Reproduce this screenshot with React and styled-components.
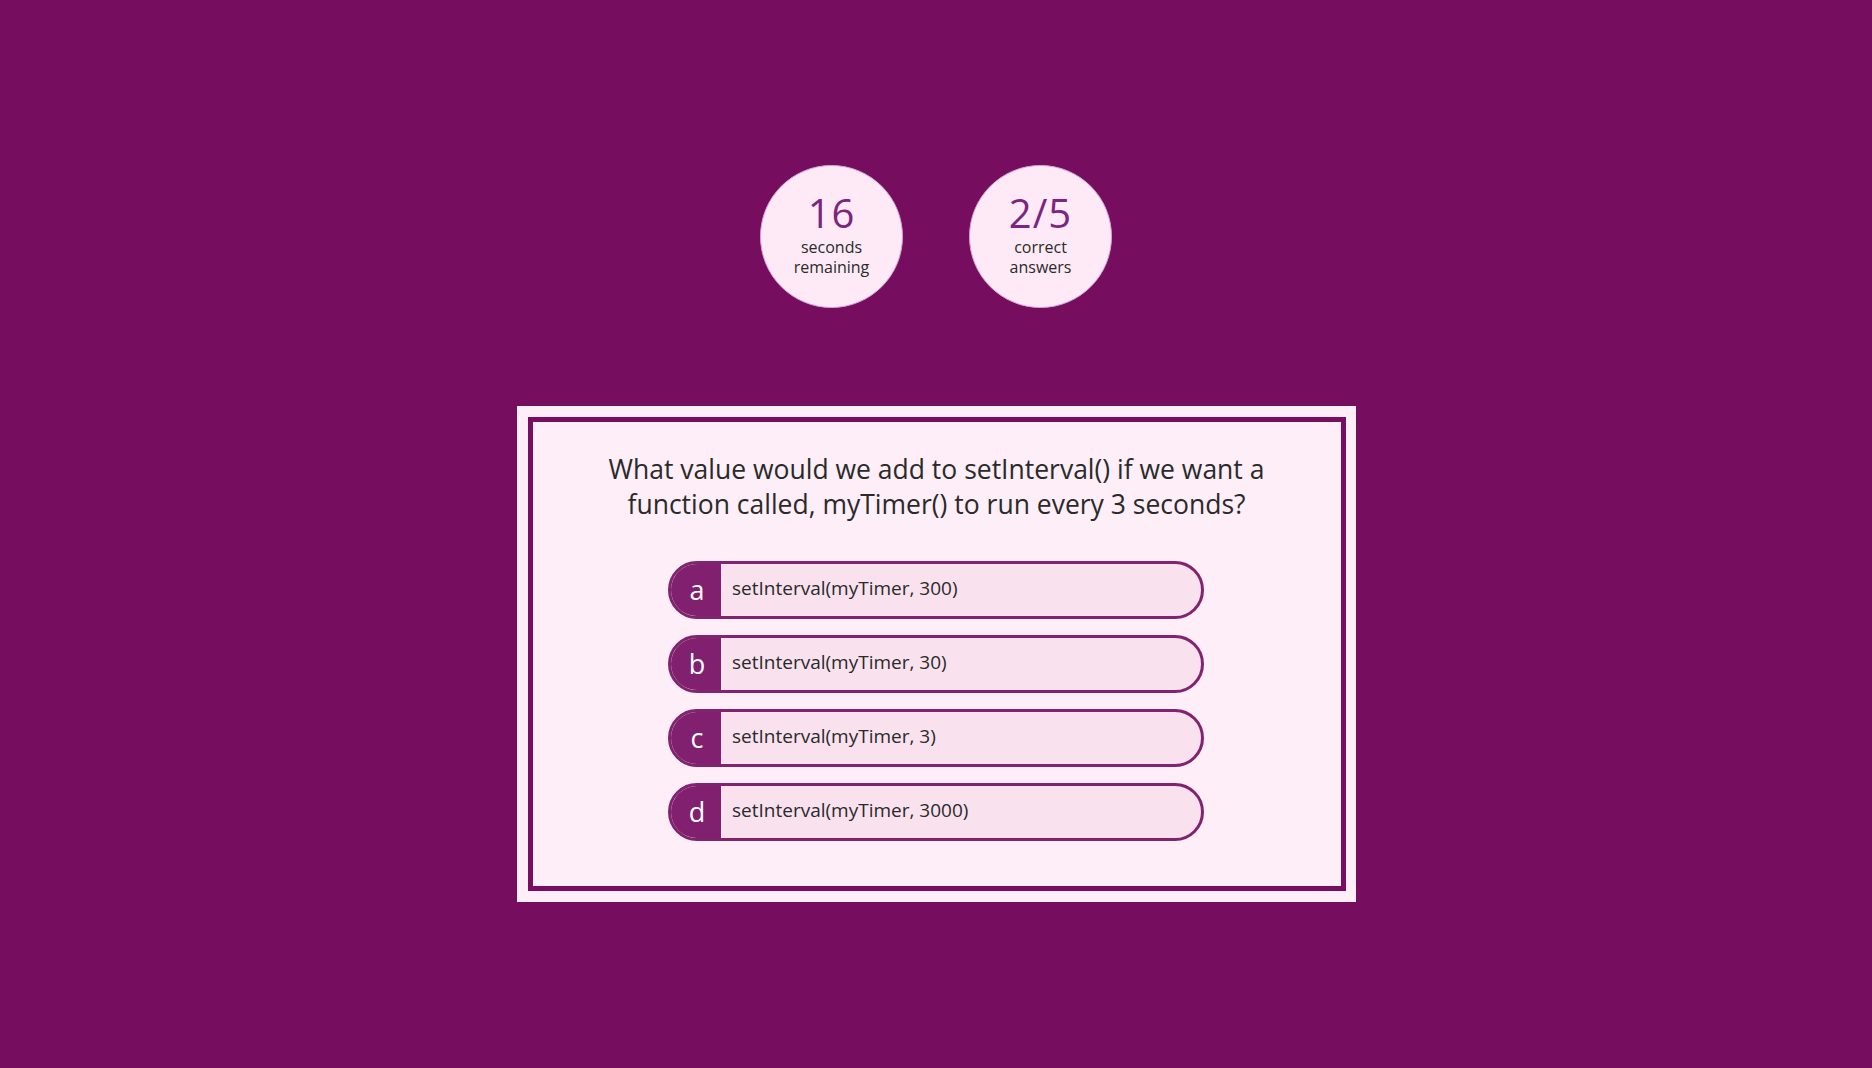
import React from 'react';
import styled, { createGlobalStyle } from 'styled-components';

const GlobalStyle = createGlobalStyle`
    html, body {
        margin: 0;
        padding: 0;
        background: #770d5f;
    }
    body {
        font-family: "Open Sans", "DejaVu Sans", sans-serif;
        min-height: 100vh;
    }
`;

const options = [
    { letter: 'a', text: 'setInterval(myTimer, 300)' },
    { letter: 'b', text: 'setInterval(myTimer, 30)' },
    { letter: 'c', text: 'setInterval(myTimer, 3)' },
    { letter: 'd', text: 'setInterval(myTimer, 3000)' },
];

const App = () => {
    return (
        <Page>
            <GlobalStyle />
            <Stats>
                <Stat>
                    <StatValue>16</StatValue>
                    <StatLabel>seconds<br />remaining</StatLabel>
                </Stat>
                <Stat>
                    <StatValue>2/5</StatValue>
                    <StatLabel>correct<br />answers</StatLabel>
                </Stat>
            </Stats>
            <Card>
                <CardInner>
                    <Question>
                        What value would we add to setInterval() if we want a<br />
                        function called, myTimer() to run every 3 seconds?
                    </Question>
                    <OptionList>
                        {options.map((o) => (
                            <Option key={o.letter}>
                                <Letter>{o.letter}</Letter>
                                <OptionText>{o.text}</OptionText>
                            </Option>
                        ))}
                    </OptionList>
                </CardInner>
            </Card>
        </Page>
    );
};

export default App;

const Page = styled.div`
    display: flex;
    flex-direction: column;
    align-items: center;
    padding-top: 165px;
`;

const Stats = styled.div`
    display: flex;
    gap: 66px;
`;

const Stat = styled.div`
    box-sizing: border-box;
    width: 143px;
    height: 143px;
    border-radius: 50%;
    background: #fdeaf6;
    border: 1px solid #d7a6d6;
    display: flex;
    flex-direction: column;
    align-items: center;
    justify-content: center;
    text-align: center;
    padding-bottom: 4px;
`;

const StatValue = styled.div`
    font-size: 40px;
    line-height: 42px;
    color: #7b2581;
    letter-spacing: 1px;
    margin-bottom: 3px;
`;

const StatLabel = styled.div`
    font-size: 16px;
    line-height: 20px;
    color: #2b2b2b;
`;

const Card = styled.div`
    box-sizing: border-box;
    width: 839px;
    margin-top: 98px;
    padding: 11px 10px 11px 11px;
    background: #fdeef7;
`;

const CardInner = styled.div`
    border: 5px solid #770e62;
    padding: 30px 0 45px;
    display: flex;
    flex-direction: column;
    align-items: center;
`;

const Question = styled.p`
    margin: 0;
    font-size: 26.5px;
    line-height: 35px;
    color: #2a2a2a;
    text-align: center;
`;

const OptionList = styled.div`
    display: flex;
    flex-direction: column;
    gap: 16px;
    width: 536px;
    margin-top: 39px;
    margin-left: -1px;
`;

const Option = styled.div`
    box-sizing: border-box;
    display: flex;
    height: 58px;
    border: 3px solid #82236f;
    border-radius: 29px;
    overflow: hidden;
    background: #f9e2ee;
`;

const Letter = styled.div`
    width: 48px;
    flex: none;
    background: #80206f;
    color: #fff;
    font-size: 27px;
    display: flex;
    align-items: center;
    justify-content: center;
    padding: 0 0 2px 2px;
`;

const OptionText = styled.div`
    display: flex;
    align-items: center;
    padding: 0 0 5px 11px;
    font-size: 19px;
    color: #2a2a2a;
`;
